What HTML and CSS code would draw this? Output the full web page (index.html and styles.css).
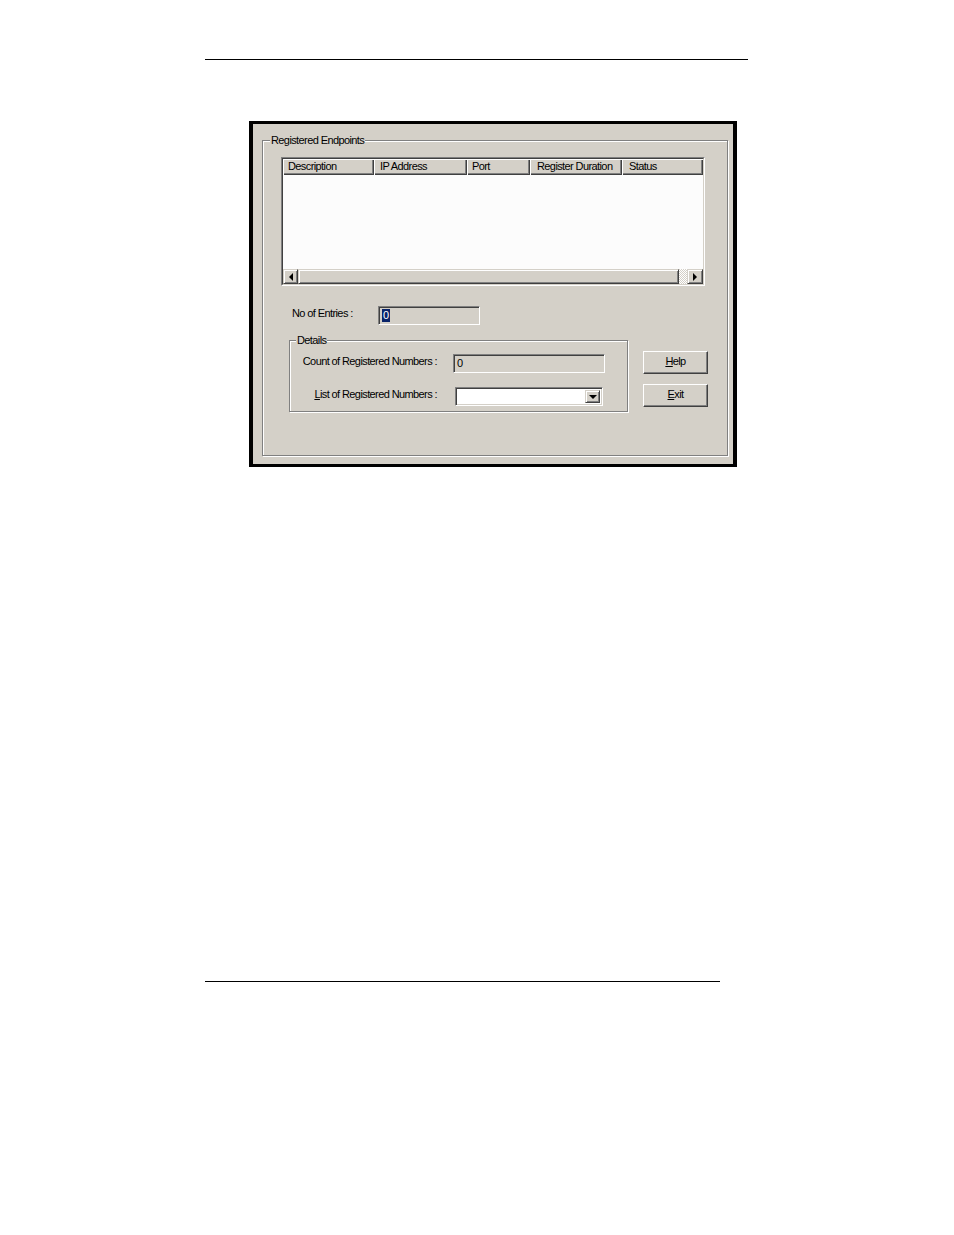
FILE: index.html
```html
<!DOCTYPE html>
<html>
<head>
<meta charset="utf-8">
<link rel="stylesheet" href="styles.css">
</head>
<body>
<div class="page">
  <div class="rule rule-top"></div>
  <div class="dialog">
    <div class="group group-main">
      <span class="legend">Registered Endpoints</span>
      <div class="listview">
        <div class="listview-inner">
          <div class="lv-header">
            <div class="lv-col col-desc">Description</div>
            <div class="lv-col col-ip">IP Address</div>
            <div class="lv-col col-port">Port</div>
            <div class="lv-col col-dur">Register Duration</div>
            <div class="lv-col col-status">Status</div>
          </div>
          <div class="lv-body"></div>
          <div class="hscroll">
            <div class="sb-btn"><span class="arrow-left"></span></div>
            <div class="sb-thumb"></div>
            <div class="sb-track"></div>
            <div class="sb-btn sb-btn-right"><span class="arrow-right"></span></div>
          </div>
        </div>
      </div>
      <div class="lower">
        <div class="lower-left">
          <div class="entries-row">
            <span class="entries-label">No of Entries :</span>
            <div class="field field-entries"><span class="selected">0</span></div>
          </div>
          <div class="group group-details">
            <span class="legend legend-details">Details</span>
            <div class="detail-row">
              <span class="detail-label">Count of Registered Numbers :</span>
              <div class="field field-count">0</div>
            </div>
            <div class="detail-row row-list">
              <span class="detail-label"><u>L</u>ist of Registered Numbers :</span>
              <div class="field combo">
                <div class="combo-text"></div>
                <div class="combo-btn"><span class="arrow-down"></span></div>
              </div>
            </div>
          </div>
        </div>
        <div class="buttons">
          <div class="btn"><span><u>H</u>elp</span></div>
          <div class="btn"><span><u>E</u>xit</span></div>
        </div>
      </div>
    </div>
  </div>
  <div class="rule rule-bottom"></div>
</div>
</body>
</html>
```

FILE: styles.css
```css
html, body {
  margin: 0;
  padding: 0;
  background: #ffffff;
}

body {
  font-family: "Liberation Sans", Arial, sans-serif;
  font-size: 11px;
  letter-spacing: -0.6px;
  color: #000;
}

.page {
  padding-top: 59px;
  height: 1235px;
  box-sizing: border-box;
}

.rule {
  height: 1px;
  background: #000;
  margin-left: 205px;
}

.rule-top {
  width: 543px;
}

.rule-bottom {
  width: 515px;
  margin-top: 514px;
}

.dialog {
  margin: 61px 0 0 249px;
  width: 488px;
  height: 346px;
  box-sizing: border-box;
  border: 4px solid #000;
  border-top-width: 3px;
  border-bottom-width: 3px;
  background: #d4d0c8;
  padding: 16px 0 0 9px;
}

.group {
  position: relative;
  box-sizing: border-box;
  border: 1px solid #808080;
  box-shadow: inset 1px 1px 0 #fff, 1px 1px 0 #fff;
}

.group-main {
  width: 466px;
  height: 316px;
  padding: 16px 0 0 18px;
}

.legend {
  position: absolute;
  top: -7px;
  left: 7px;
  padding: 0 1px;
  line-height: 13px;
  background: #d4d0c8;
  white-space: nowrap;
}

.legend-details {
  left: 6px;
}

/* List view */
.listview {
  width: 424px;
  height: 129px;
  box-sizing: border-box;
  border: 1px solid;
  border-color: #808080 #fff #fff #808080;
}

.listview-inner {
  height: 100%;
  box-sizing: border-box;
  border: 1px solid;
  border-color: #404040 #d4d0c8 #d4d0c8 #404040;
  display: flex;
  flex-direction: column;
}

.lv-header {
  display: flex;
  height: 16px;
  flex: none;
}

.lv-col {
  box-sizing: border-box;
  height: 16px;
  line-height: 15px;
  padding-left: 5px;
  background: #d4d0c8;
  box-shadow: inset 1px 1px 0 #fff, inset -1px -1px 0 #404040, inset -2px -2px 0 #808080;
  white-space: nowrap;
  overflow: hidden;
}

.col-desc { width: 91px; }
.col-ip { width: 93px; padding-left: 6px; }
.col-port { width: 63px; }
.col-dur { width: 92px; padding-left: 7px; }
.col-status { width: 81px; padding-left: 7px; }

.lv-body {
  flex: 1;
  background: #fcfcfc;
}

.hscroll {
  display: flex;
  height: 15px;
  flex: none;
}

.sb-btn {
  width: 15px;
  box-sizing: border-box;
  background: #d4d0c8;
  border: 1px solid;
  border-color: #d4d0c8 #404040 #404040 #d4d0c8;
  box-shadow: inset 1px 1px 0 #fff, inset -1px -1px 0 #808080;
  display: flex;
  align-items: center;
  justify-content: center;
}

.sb-btn-right {
  width: 16px;
}

.sb-thumb {
  width: 381px;
  box-sizing: border-box;
  background: #d4d0c8;
  border: 1px solid;
  border-color: #d4d0c8 #404040 #404040 #d4d0c8;
  box-shadow: inset 1px 1px 0 #fff, inset -1px -1px 0 #808080;
}

.sb-track {
  width: 8px;
  background: repeating-conic-gradient(#fff 0 25%, #d4d0c8 0 50%) 0 0 / 2px 2px;
}

.arrow-left {
  width: 0;
  height: 0;
  border-right: 4px solid #000;
  border-top: 4px solid transparent;
  border-bottom: 4px solid transparent;
}

.arrow-right {
  width: 0;
  height: 0;
  border-left: 4px solid #000;
  border-top: 4px solid transparent;
  border-bottom: 4px solid transparent;
}

/* Lower area */
.lower {
  display: flex;
  margin-top: 20px;
}

.lower-left {
  width: 347px;
}

.entries-row {
  display: flex;
  align-items: flex-start;
  height: 19px;
  margin-left: 11px;
}

.entries-label {
  width: 86px;
  line-height: 13px;
  margin-top: 1px;
  white-space: nowrap;
}

.field {
  box-sizing: border-box;
  height: 19px;
  border: 1px solid;
  border-color: #808080 #fff #fff #808080;
  box-shadow: inset 1px 1px 0 #404040, inset -1px -1px 0 #d4d0c8;
  background: #d4d0c8;
}

.field-entries {
  width: 102px;
  padding: 2px 0 0 3px;
}

.selected {
  display: inline-block;
  background: #0a246a;
  color: #fff;
  line-height: 13px;
  padding: 0 1px;
}

.group-details {
  margin: 15px 0 0 8px;
  width: 339px;
  height: 72px;
  padding-top: 13px;
}

.detail-row {
  display: flex;
  align-items: flex-start;
  height: 19px;
}

.row-list {
  margin-top: 14px;
}

.detail-label {
  width: 147px;
  line-height: 13px;
  margin-top: 1px;
  text-align: right;
  white-space: nowrap;
}

.field-count {
  width: 152px;
  margin-left: 16px;
  padding: 2px 0 0 3px;
  line-height: 13px;
}

.combo {
  width: 148px;
  margin-left: 18px;
  background: #fff;
  display: flex;
  padding: 2px;
  box-shadow: inset 1px 1px 0 #404040, inset -1px -1px 0 #d4d0c8;
}

.combo-text {
  flex: 1;
  background: #fff;
}

.combo-btn {
  width: 15px;
  box-sizing: border-box;
  background: #d4d0c8;
  border: 1px solid;
  border-color: #d4d0c8 #404040 #404040 #d4d0c8;
  box-shadow: inset 1px 1px 0 #fff, inset -1px -1px 0 #808080;
  display: flex;
  align-items: center;
  justify-content: center;
}

.arrow-down {
  width: 0;
  height: 0;
  border-top: 4px solid #000;
  border-left: 4px solid transparent;
  border-right: 4px solid transparent;
}

/* Buttons */
.buttons {
  margin: 45px 0 0 15px;
  display: flex;
  flex-direction: column;
  gap: 10px;
}

.btn {
  width: 65px;
  height: 23px;
  box-sizing: border-box;
  background: #d4d0c8;
  border: 1px solid;
  border-color: #fff #404040 #404040 #fff;
  box-shadow: inset -1px -1px 0 #808080;
  display: flex;
  align-items: flex-start;
  justify-content: center;
  padding-top: 3px;
  line-height: 13px;
}
```
